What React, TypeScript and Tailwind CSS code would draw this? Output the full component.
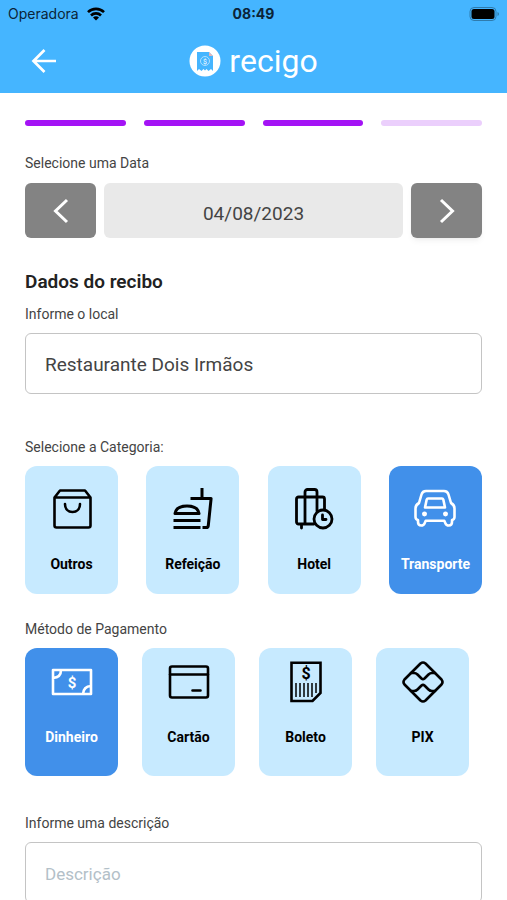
import React, { useState } from "react";

interface Option {
  id: string;
  label: string;
  icon: React.ReactNode;
}

interface OptionCardProps {
  option: Option;
  selected: boolean;
  compact?: boolean;
  onSelect: (id: string) => void;
}

const iconProps = {
  className: "h-[42px] w-[42px]",
  viewBox: "0 0 42 42",
  fill: "none",
  stroke: "currentColor",
  strokeWidth: 2.6,
  strokeLinecap: "round" as const,
  strokeLinejoin: "round" as const,
  "aria-hidden": true,
};

const categories: Option[] = [
  {
    id: "outros",
    label: "Outros",
    icon: (
      <svg {...iconProps}>
        <path d="M3.5 9.5 9 2.5h25l5.500 7v28a2 2 0 0 1-2 2h-32a2 2 0 0 1-2-2zM3.5 9.5h36" />
        <path d="M14 16c0 5 3.2 8 7.5 8s7.5-3 7.5-8" />
      </svg>
    ),
  },
  {
    id: "refeicao",
    label: "Refeição",
    icon: (
      <svg {...iconProps} strokeWidth={3} strokeLinecap="butt">
        <path d="M30 0v10M18.5 10.5h20.6L36.3 37.5q-.2 2-2 2h-3.8" />
        <path d="M3 25.5c.8-5 5.700-7.500 12-7.500s11.200 2.500 12 7.500zM1.500 32.500H28.500M1.500 39.500H28.500" />
      </svg>
    ),
  },
  {
    id: "hotel",
    label: "Hotel",
    icon: (
      <svg {...iconProps} strokeWidth={2.8}>
        <path d="M21 36H5.500a2 2 0 0 1-2-2V11a2 2 0 0 1 2-2h24a2 2 0 0 1 2 2v10.500M12 36V4a2.500 2.500 0 0 1 2.500-2.500h7A2.500 2.500 0 0 1 24 4v19M8.500 37v3" />
        <circle cx="30" cy="31" r="9" />
        <path d="M29.500 27v4.500H33" />
      </svg>
    ),
  },
  {
    id: "transporte",
    label: "Transporte",
    icon: (
      <svg {...iconProps}>
        <path d="M12 3h18q3.500 0 4.500 3.500L37 15q3.500 2 3.500 5.500V29q0 2.500-2.500 3v2q0 3.500-3.200 3.500-2.500 0-3.300-2l-1.200-2.700H11.700l-1.200 2.700q-.8 2-3.300 2Q4 37.500 4 34v-2q-2.500-.5-2.500-3v-8.500Q1.500 17 5 15l2.500-8.500Q8.500 3 12 3z" />
        <path d="M14 10.500h14q1 0 1.300 1l1.700 8H11l1.700-8q.3-1 1.300-1z" />
        <circle cx="10.500" cy="26" r="1.200" fill="currentColor" />
        <circle cx="31.500" cy="26" r="1.200" fill="currentColor" />
      </svg>
    ),
  },
];

const payments: Option[] = [
  {
    id: "dinheiro",
    label: "Dinheiro",
    icon: (
      <svg {...iconProps}>
        <path d="M2 9h38v24H2zM10 9q0 7.500-8 8M40 25q-7.500.5-8 8" />
        <text
          x="21"
          y="26.500"
          textAnchor="middle"
          fill="currentColor"
          stroke="none"
          fontSize="15"
          fontWeight="700"
        >
          $
        </text>
      </svg>
    ),
  },
  {
    id: "cartao",
    label: "Cartão",
    icon: (
      <svg {...iconProps}>
        <rect x="2" y="5.500" width="38" height="31" rx="2" />
        <path d="M2 13.500h38M24.500 29.500h8" />
      </svg>
    ),
  },
  {
    id: "boleto",
    label: "Boleto",
    icon: (
      <svg {...iconProps} strokeLinecap="butt" strokeLinejoin="miter">
        <path d="M6.500 1.800h29V32l-8 8h-21z" />
        <path
          strokeWidth="1.500"
          d="M11 22v14M15 22v14M19 22v14M23 22v14M27 22v14M31 22v10"
        />
        <text
          x="21"
          y="18"
          textAnchor="middle"
          fill="currentColor"
          stroke="none"
          fontSize="16"
          fontWeight="700"
        >
          $
        </text>
      </svg>
    ),
  },
  {
    id: "pix",
    label: "PIX",
    icon: (
      <svg {...iconProps}>
        <path d="M18.500 2.500q2.500-2 5 0L39.500 18.500q2 2.500 0 5L23.500 39.500q-2.500 2-5 0L2.500 23.500q-2-2.500 0-5z" />
        <path d="M9 12h3q2 0 3.500 1.500l4 4q1.500 1.300 3 0l4-4Q28 12 30 12h3M9 30h3q2 0 3.500-1.500l4-4q1.500-1.300 3 0l4 4Q28 30 30 30h3" />
      </svg>
    ),
  },
];

function OptionCard({ option, selected, compact, onSelect }: OptionCardProps) {
  return (
    <button
      type="button"
      aria-pressed={selected}
      onClick={() => onSelect(option.id)}
      className={`flex h-32 w-[93px] flex-col items-center rounded-xl text-sm leading-5 font-bold ${
        compact ? "gap-6 pt-[13px]" : "gap-6 pt-[22px]"
      } ${selected ? "bg-[#4190ea] text-white" : "bg-[#c7eaff] text-black"}`}
    >
      {option.icon}
      <span>{option.label}</span>
    </button>
  );
}

function StatusBar() {
  return (
    <div className="grid h-7 grid-cols-3 items-center px-2 font-[Inter,sans-serif] text-sm text-[#0b2438]">
      <div className="flex items-center gap-2">
        <span>Operadora</span>
        <svg className="h-3.5 w-[18px]" viewBox="0 0 18 14" fill="none" stroke="#000" aria-hidden>
          <path strokeWidth="2.600" d="M1 5.200a11.300 11.300 0 0 1 16 0M4 8.500a7 7 0 0 1 10 0" />
          <path fill="#000" stroke="none" d="m9 13.500 3-3a4.200 4.200 0 0 0-6 0z" />
        </svg>
      </div>
      <span className="text-center font-bold">08:49</span>
      <svg className="h-3.5 w-[30px] justify-self-end" viewBox="0 0 30 14" aria-hidden>
        <rect x="1" y=".5" width="26" height="13" rx="4" fill="none" stroke="#2f7bad" />
        <rect x="2.500" y="2" width="23" height="10" rx="2.500" fill="#000" />
        <path d="M28.500 5v4q1.500-.5 1.500-2t-1.500-2z" fill="#2f7bad" />
      </svg>
    </div>
  );
}

function Logo() {
  return (
    <div className="flex items-center gap-2">
      <svg className="h-8 w-8" viewBox="0 0 32 32" aria-hidden>
        <circle cx="16" cy="16" r="15.500" fill="#fff" />
        <path
          fill="#45b5ff"
          d="M8 7h12l4 4v15l-2-2-2.500 2-2-2-1.500 1.500-1.500-1.500-2 2L10 24l-2 2z"
        />
        <path fill="#e5b5b8" d="M20 7l4 4h-4z" />
        <circle cx="16" cy="16" r="4.500" fill="none" stroke="#c7eaff" strokeWidth=".8" />
        <text x="16" y="18.500" textAnchor="middle" fill="#fff" fontSize="7">
          $
        </text>
      </svg>
      <span className="text-[32px] leading-9 text-white">recigo</span>
    </div>
  );
}

export default function App() {
  const [category, setCategory] = useState("transporte");
  const [payment, setPayment] = useState("dinheiro");
  const [date, setDate] = useState(new Date(2023, 7, 4));
  const [place, setPlace] = useState("Restaurante Dois Irmãos");
  const [description, setDescription] = useState("");

  // avança ou volta um dia na data do recibo
  const moveDay = (days: number) => {
    const next = new Date(date);
    next.setDate(next.getDate() + days);
    setDate(next);
  };

  const day = String(date.getDate()).padStart(2, "0");
  const month = String(date.getMonth() + 1).padStart(2, "0");

  return (
    <div className="min-h-screen bg-white font-[Roboto,sans-serif] text-sm text-[#444]">
      <header className="bg-[#45b5ff]">
        <StatusBar />
        <div className="grid h-[65px] grid-cols-[1fr_auto_1fr] items-center px-[30px]">
          <button type="button" aria-label="Voltar" className="w-7 text-white">
            <svg
              className="h-7 w-7"
              viewBox="0 0 28 28"
              fill="none"
              stroke="currentColor"
              strokeWidth="2.700"
            >
              <path d="M26 14H4M14.500 3 3.500 14l11 11" />
            </svg>
          </button>
          <Logo />
        </div>
      </header>

      <main className="px-[25px] pt-[27px] pb-6">
        {/* etapas */}
        <div className="grid grid-cols-4 gap-[18px]">
          <div className="h-1.5 rounded-full bg-[#a413f5]" />
          <div className="h-1.5 rounded-full bg-[#a413f5]" />
          <div className="h-1.5 rounded-full bg-[#a413f5]" />
          <div className="h-1.5 rounded-full bg-[#ebcffc]" />
        </div>

        <p className="mt-[27px] leading-5">Selecione uma Data</p>
        <div className="mt-2.5 flex h-[55px] gap-2">
          <button
            type="button"
            aria-label="Dia anterior"
            onClick={() => moveDay(-1)}
            className="flex w-[71px] items-center justify-center rounded-md bg-[#838383] text-white"
          >
            <svg className="h-7 w-7" viewBox="0 0 28 28" fill="none" stroke="currentColor" strokeWidth="3">
              <path d="M20 3 8.500 14 20 25" />
            </svg>
          </button>
          <div className="flex flex-1 items-center justify-center rounded-md bg-[#e9e9e9] pt-1.5 text-[19px]">
            {day}/{month}/{date.getFullYear()}
          </div>
          <button
            type="button"
            aria-label="Próximo dia"
            onClick={() => moveDay(1)}
            className="flex w-[71px] items-center justify-center rounded-md bg-[#838383] text-white shadow-md shadow-black/5"
          >
            <svg className="h-7 w-7" viewBox="0 0 28 28" fill="none" stroke="currentColor" strokeWidth="3">
              <path d="M8 3l11.500 11L8 25" />
            </svg>
          </button>
        </div>

        <h1 className="mt-8 text-[19px] leading-6 font-semibold text-[#222]">
          Dados do recibo
        </h1>
        <label htmlFor="place" className="mt-2.5 block leading-5">
          Informe o local
        </label>
        <input
          id="place"
          type="text"
          value={place}
          onChange={(e) => setPlace(e.target.value)}
          className="mt-[9px] block h-[61px] w-full rounded-md border border-[#c4c4c4] px-[19px] pt-0.5 text-[19px] outline-none"
        />

        <p className="mt-[43px] leading-5">Selecione a Categoria:</p>
        <div className="mt-[9px] flex justify-between">
          {categories.map((option) => (
            <OptionCard
              key={option.id}
              option={option}
              selected={category === option.id}
              onSelect={setCategory}
            />
          ))}
        </div>

        <p className="mt-[25px] leading-5">Método de Pagamento</p>
        <div className="mt-[9px] flex gap-6">
          {payments.map((option) => (
            <OptionCard
              key={option.id}
              option={option}
              compact
              selected={payment === option.id}
              onSelect={setPayment}
            />
          ))}
        </div>

        <label htmlFor="description" className="mt-[37px] block leading-5">
          Informe uma descrição
        </label>
        <input
          id="description"
          type="text"
          placeholder="Descrição"
          value={description}
          onChange={(e) => setDescription(e.target.value)}
          className="mt-[9px] block h-[61px] w-full rounded-md border border-[#c4c4c4] px-[19px] pt-0.5 text-[17px] outline-none placeholder:text-[#b3c0c8]"
        />
      </main>
    </div>
  );
}
